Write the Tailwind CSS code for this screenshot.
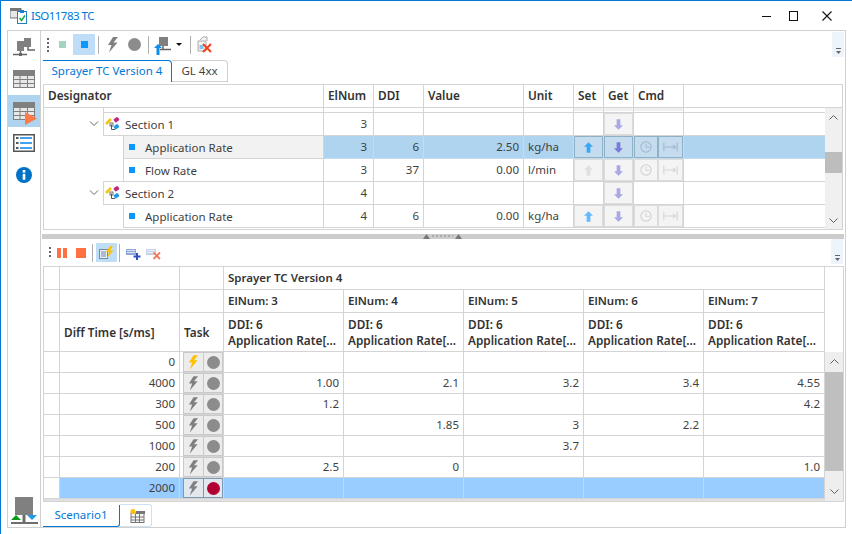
<!DOCTYPE html>
<html lang="en">
<head>
<meta charset="UTF-8" />
<title>ISO11783 TC</title>
<script src="https://cdn.jsdelivr.net/npm/@tailwindcss/browser@4"></script>
</head>
<body class="bg-white">
<svg class="absolute w-0 h-0">
  <defs>
    <symbol id="bolt" viewBox="0 0 12 16"><path d="M6 0 L1 8 L4.5 8 L2 15.5 L10.5 5.5 L6.5 5.5 L11 0 Z" fill="currentColor"/></symbol>
    <symbol id="up" viewBox="0 0 12 14"><path d="M6 0 L12 6 L8.5 6 L8.5 14 L3.5 14 L3.5 6 L0 6 Z" fill="currentColor"/></symbol>
    <symbol id="down" viewBox="0 0 12 14"><path d="M6 14 L12 8 L8.5 8 L8.5 0 L3.5 0 L3.5 8 L0 8 Z" fill="currentColor"/></symbol>
    <symbol id="clock" viewBox="0 0 14 14"><circle cx="7" cy="7" r="6" fill="none" stroke="currentColor" stroke-width="1.2"/><path d="M7 3 V7.5 H11" fill="none" stroke="currentColor"/></symbol>
    <symbol id="range" viewBox="0 0 18 12"><path d="M1 1 V11 M17 1 V11 M2 6 H15 M12 3.5 L15 6 L12 8.5" fill="none" stroke="currentColor" stroke-width="1.3"/></symbol>
    <symbol id="sect" viewBox="0 0 17 16">
      <path d="M1 7 L6 2 L8 4 L3 9 Z" fill="#f5c518"/>
      <rect x="10" y="2" width="5" height="4" rx="1" fill="#c2267a" transform="rotate(-35 12 4)"/>
      <path d="M7.500 8.500 V13.500 H11" fill="none" stroke="#555" stroke-width="1"/>
      <rect x="10" y="9" width="5" height="4" rx="1" fill="#1e9be8" transform="rotate(-35 12 11)"/>
      <rect x="6" y="7" width="3" height="3" fill="none" stroke="#555" stroke-width="0.8"/>
    </symbol>
    <symbol id="grid" viewBox="0 0 22 18">
      <rect width="22" height="18" fill="#808080"/>
      <path d="M1 6 H6.500 V9 H1 Z M7.500 6 H14 V9 H7.500 Z M15 6 H21 V9 H15 Z M1 10 H6.500 V13 H1 Z M7.500 10 H14 V13 H7.500 Z M15 10 H21 V13 H15 Z M1 14 H6.500 V17 H1 Z M7.500 14 H14 V17 H7.500 Z M15 14 H21 V17 H15 Z" fill="#e8e8e8"/>
    </symbol>
  </defs>
</svg>

<div class="w-[852px] h-[534px] overflow-hidden border-t border-l border-[#0078d7] flex flex-col font-['Noto_Sans','Open_Sans',sans-serif] text-[11.5px] text-[#3f3f3f]">

  <!-- title bar -->
  <div class="h-[29px] flex items-center shrink-0 relative">
    <svg class="ml-[9px] mt-[1px]" width="17" height="16" viewBox="0 0 17 16">
      <rect x="0" y="0" width="11" height="10" fill="#e6e6e6" stroke="#777"/>
      <rect x="0" y="0" width="11" height="3" fill="#777"/>
      <rect x="7.500" y="3.500" width="9" height="12" fill="#fff" stroke="#1f7fc4"/>
      <rect x="10" y="2" width="4" height="3" fill="#1f7fc4"/>
      <path d="M9.500 10 L11.500 12.500 L15 7.500" fill="none" stroke="#1aa84b" stroke-width="1.500"/>
    </svg>
    <span class="ml-[4px] text-[#0078d7] text-[11.5px] tracking-[-0.5px]">ISO11783 TC</span>
    <div class="ml-auto mr-[20px] flex items-center">
      <svg width="9" height="10" viewBox="0 0 9 10"><path d="M0 5.500 H9" stroke="#111"/></svg>
      <svg class="ml-[18px]" width="9" height="10" viewBox="0 0 9 10"><rect x="0.500" y="0.500" width="8" height="9" fill="none" stroke="#111"/></svg>
      <svg class="ml-[24px]" width="10" height="10" viewBox="0 0 10 10"><path d="M0.500 0.500 L9.500 9.500 M9.500 0.500 L0.500 9.500" stroke="#111" stroke-width="1.100"/></svg>
    </div>
  </div>

  <!-- main box -->
  <div class="ml-[6px] w-[839px] h-[498px] border border-[#d0d0d0] flex">

    <!-- sidebar -->
    <div class="w-[33px] border-r border-[#d0d0d0] flex flex-col shrink-0">
      <div class="h-[32px] flex items-center justify-center">
        <svg width="23" height="21" viewBox="0 0 23 21">
          <rect x="11" y="1" width="7" height="9" fill="#808080"/>
          <rect x="4" y="4" width="7" height="10" fill="#808080"/>
          <path d="M15 10 V13 H22 M7.500 14 V19 M0 17.500 H14" fill="none" stroke="#666" stroke-width="1.500"/>
          <rect x="6" y="16" width="3" height="3" fill="#666"/>
        </svg>
      </div>
      <div class="h-[32px] flex items-center justify-center"><svg width="22" height="18"><use href="#grid"/></svg></div>
      <div class="h-[32px] bg-[#aed4ef] flex items-center justify-center relative">
        <svg width="22" height="18"><use href="#grid"/></svg>
        <svg class="absolute left-[17px] top-[17px]" width="12" height="13" viewBox="0 0 12 13"><path d="M0 0 L12 6.500 L0 13 Z" fill="#ff7a45"/></svg>
      </div>
      <div class="h-[32px] flex items-center justify-center">
        <svg width="22" height="18" viewBox="0 0 22 18">
          <rect x="0.750" y="0.750" width="20.500" height="16.500" fill="#fff" stroke="#555" stroke-width="1.500"/>
          <path d="M3 4 H5.500 M3 9 H5.500 M3 14 H5.500" stroke="#555" stroke-width="2"/>
          <path d="M7 4 H19 M7 9 H19 M7 14 H19" stroke="#0a84e8" stroke-width="1.600"/>
        </svg>
      </div>
      <div class="h-[32px] flex items-center justify-center">
        <svg width="16" height="16" viewBox="0 0 16 16">
          <circle cx="8" cy="8" r="8" fill="#0072c6"/>
          <rect x="6.700" y="3" width="2.600" height="2.600" fill="#fff"/>
          <rect x="6.700" y="6.800" width="2.600" height="6" fill="#fff"/>
        </svg>
      </div>
      <div class="mt-auto mb-[2px] pl-[3px]">
        <svg width="27" height="28" viewBox="0 0 27 28">
          <rect x="4" y="0" width="18" height="18" fill="#808080"/>
          <path d="M11.500 18 H14.500 V25 H11.500 Z M0 25 H27 V27 H0 Z" fill="#6e6e6e"/>
          <path d="M0 23 L5 18 L10 23 Z" fill="#0a9a1e"/>
          <path d="M16 18 L26 18 L21 23 Z" fill="#1e9be8"/>
        </svg>
      </div>
    </div>

    <!-- right pane -->
    <div class="flex-1 flex flex-col min-w-0">

      <!-- top toolbar -->
      <div class="h-[27px] flex items-center shrink-0 relative">
        <div class="ml-[6px] w-[2px] h-[14px] bg-[repeating-linear-gradient(#666_0_2px,transparent_2px_4px)]"></div>
        <div class="ml-[10px] w-[7px] h-[7px] bg-[#a3d4c0]"></div>
        <div class="ml-[7px] w-[22px] h-[21px] bg-[#c0ddf8] flex items-center justify-center"><div class="w-[7px] h-[7px] bg-[#0a98ff]"></div></div>
        <div class="ml-[3px] w-px h-[18px] bg-[#b0b0b0]"></div>
        <svg class="ml-[8px] text-[#808080]" width="12" height="16"><use href="#bolt"/></svg>
        <svg class="ml-[9px]" width="13" height="13" viewBox="0 0 13 13"><circle cx="6.500" cy="6.500" r="6.500" fill="#8c8c8c"/></svg>
        <div class="ml-[7px] w-px h-[18px] bg-[#b0b0b0]"></div>
        <svg class="ml-[5px] mt-[2px]" width="17" height="18" viewBox="0 0 17 18">
          <rect x="5" y="0" width="9" height="9" fill="#808080"/>
          <path d="M9 9 V12 M6 12.500 H17" stroke="#666" stroke-width="1.500"/>
          <path d="M0 11 L4 7 L8 11 L5.500 11 L5.500 18 L2.500 18 L2.500 11 Z" fill="#0a8ff0"/>
        </svg>
        <svg class="ml-[5px]" width="6" height="3" viewBox="0 0 6 3"><path d="M0 0 H6 L3 3 Z" fill="#111"/></svg>
        <div class="ml-[8px] w-px h-[18px] bg-[#b0b0b0]"></div>
        <svg class="ml-[6px]" width="15" height="17" viewBox="0 0 15 17">
          <path d="M3 4 L6 1 H10 V5 M1 5 H9 V15 H1 Z" fill="#f3f3f3" stroke="#aaa"/>
          <rect x="2.500" y="9" width="4" height="4" fill="#7fc3f0"/>
          <path d="M6 8 L14 16 M14 8 L6 16" stroke="#f0401c" stroke-width="2"/>
        </svg>
        <div class="absolute left-[791px] top-[1px] w-[12px] h-[25px] bg-[#eef4fb] flex flex-col items-center justify-end pb-[3px]">
          <div class="w-[5px] h-px bg-[#666]"></div>
          <svg class="mt-[2px]" width="5" height="3" viewBox="0 0 5 3"><path d="M0 0 H5 L2.500 3 Z" fill="#666"/></svg>
        </div>
      </div>

      <!-- tabs -->
      <div class="h-[26px] pl-[2px] pt-[2px] flex shrink-0">
        <div class="w-[129px] h-[22px] border-t border-r border-[#0078d7] rounded-tr-[4px] text-[#0078d7] text-center leading-[20px]">Sprayer TC Version 4</div>
        <div class="w-[56px] h-[22px] border-t border-r border-b border-[#d0d0d0] rounded-tr-[4px] text-center leading-[20px]">GL 4xx</div>
      </div>

      <!-- device grid -->
      <div class="ml-[2px] w-[800px] h-[146px] border border-[#d4d4d4] flex flex-col shrink-0">
        <div class="flex h-[23px] font-semibold text-[11.8px] text-[#333] leading-[21px] [&>div]:border-r [&>div]:border-b [&>div]:border-[#d4d4d4] [&>div]:px-[4px]">
          <div class="w-[280px]">Designator</div>
          <div class="w-[50px]">ElNum</div>
          <div class="w-[50px]">DDI</div>
          <div class="w-[100px]">Value</div>
          <div class="w-[50px]">Unit</div>
          <div class="w-[30px]">Set</div>
          <div class="w-[30px]">Get</div>
          <div class="w-[50px]">Cmd</div>
          <div class="flex-1 !border-r-0"></div>
        </div>
        <div class="flex h-[121px]">
          <div class="w-[781px] overflow-hidden">
            <div class="flex h-[5px] [&>div]:border-r [&>div]:border-b [&>div]:border-[#d4d4d4]">
              <div class="w-[280px] !border-b-0 relative"><div class="absolute left-[59px] top-0 bottom-0 border-l border-[#d4d4d4]"></div><div class="absolute left-[59px] right-0 bottom-0 border-b border-[#d4d4d4]"></div></div>
              <div class="w-[50px]"></div><div class="w-[50px]"></div><div class="w-[100px]"></div><div class="w-[50px]"></div>
              <div class="w-[30px] bg-[linear-gradient(#f0f0f0_3px,#fff_3px)]"></div><div class="w-[30px] bg-[linear-gradient(#f0f0f0_3px,#fff_3px)]"></div><div class="w-[50px] bg-[linear-gradient(#f0f0f0_3px,#fff_3px)]"></div><div class="flex-1 !border-r-0"></div>
            </div>

            <div class="flex h-[23px] leading-[21px] [&>div]:border-r [&>div]:border-[#d4d4d4]">
              <div class="w-[280px] relative"><svg class="absolute left-[45px] top-[8px]" width="10" height="6" viewBox="0 0 10 6"><path d="M1 0.500 L5 4.500 L9 0.500" fill="none" stroke="#666"/></svg>
                <div class="ml-[59px] h-[23px] border-l border-b border-[#d4d4d4] flex items-center"><svg width="17" height="16"><use href="#sect"/></svg><span class="ml-[4px]">Section 1</span></div></div>
              <div class="w-[50px] border-b text-right pr-[6px]">3</div><div class="w-[50px] border-b"></div><div class="w-[100px] border-b"></div><div class="w-[50px] border-b"></div><div class="w-[30px] border-b"></div>
              <div class="w-[30px] border-b"><div class="h-full bg-[#f4f4f4] border border-[#dcdcdc] flex items-center justify-center"><svg class="text-[#a9a9e6]" width="9" height="13"><use href="#down"/></svg></div></div>
              <div class="w-[50px] border-b"></div><div class="flex-1 border-b !border-r-0"></div>
            </div>

            <div class="flex h-[23px] leading-[21px] bg-[#aed4ef] [&>div]:border-r [&>div]:border-[#c4dcec]">
              <div class="w-[280px] bg-white !border-r-[#d4d4d4]"><div class="ml-[79px] h-[23px] bg-[#f2f2f2] border-l border-b border-[#d4d4d4] flex items-center"><div class="ml-[5px] w-[6px] h-[6px] bg-[#0a98ff] mb-[1px]"></div><span class="ml-[10px]">Application Rate</span></div></div>
              <div class="w-[50px] border-b text-right pr-[6px]">3</div><div class="w-[50px] border-b text-right pr-[4px]">6</div><div class="w-[100px] border-b text-right pr-[4px]">2.50</div><div class="w-[50px] border-b pl-[4px]">kg/ha</div>
              <div class="w-[30px] border-b"><div class="h-full border border-[#8eb1c8] bg-[#c5dcee] flex items-center justify-center"><svg class="text-[#3aa6f5]" width="9" height="13"><use href="#up"/></svg></div></div>
              <div class="w-[30px] border-b"><div class="h-full border border-[#8eb1c8] bg-[#c5dcee] flex items-center justify-center"><svg class="text-[#7a7ad8]" width="9" height="13"><use href="#down"/></svg></div></div>
              <div class="w-[50px] border-b flex"><div class="w-[24px] border border-[#8eb1c8] bg-[#c5dcee] flex items-center justify-center"><svg class="text-[#9db8cc]" width="12" height="12"><use href="#clock"/></svg></div><div class="w-[25px] border border-[#8eb1c8] bg-[#c5dcee] flex items-center justify-center"><svg class="text-[#9db8cc]" width="15" height="10"><use href="#range"/></svg></div></div>
              <div class="flex-1 border-b !border-r-0"></div>
            </div>

            <div class="flex h-[23px] leading-[21px] [&>div]:border-r [&>div]:border-[#d4d4d4]">
              <div class="w-[280px]"><div class="ml-[79px] h-[23px] border-l border-b border-[#d4d4d4] flex items-center"><div class="ml-[5px] w-[6px] h-[6px] bg-[#0a98ff] mb-[1px]"></div><span class="ml-[10px]">Flow Rate</span></div></div>
              <div class="w-[50px] border-b text-right pr-[6px]">3</div><div class="w-[50px] border-b text-right pr-[4px]">37</div><div class="w-[100px] border-b text-right pr-[4px]">0.00</div><div class="w-[50px] border-b pl-[4px]">l/min</div>
              <div class="w-[30px] border-b"><div class="h-full bg-[#f4f4f4] border border-[#dcdcdc] flex items-center justify-center"><svg class="text-[#e0e0e0]" width="9" height="13"><use href="#up"/></svg></div></div>
              <div class="w-[30px] border-b"><div class="h-full bg-[#f4f4f4] border border-[#dcdcdc] flex items-center justify-center"><svg class="text-[#a9a9e6]" width="9" height="13"><use href="#down"/></svg></div></div>
              <div class="w-[50px] border-b flex"><div class="w-[24px] bg-[#f4f4f4] border border-[#dcdcdc] flex items-center justify-center"><svg class="text-[#cfcfcf]" width="12" height="12"><use href="#clock"/></svg></div><div class="w-[25px] bg-[#f4f4f4] border border-[#dcdcdc] flex items-center justify-center"><svg class="text-[#d4d4d4]" width="15" height="10"><use href="#range"/></svg></div></div>
              <div class="flex-1 border-b !border-r-0"></div>
            </div>

            <div class="flex h-[23px] leading-[21px] [&>div]:border-r [&>div]:border-[#d4d4d4]">
              <div class="w-[280px] relative"><svg class="absolute left-[45px] top-[8px]" width="10" height="6" viewBox="0 0 10 6"><path d="M1 0.500 L5 4.500 L9 0.500" fill="none" stroke="#666"/></svg>
                <div class="ml-[59px] h-[24px] -mt-px border-l border-t border-b border-[#d4d4d4] flex items-center"><svg width="17" height="16"><use href="#sect"/></svg><span class="ml-[4px]">Section 2</span></div></div>
              <div class="w-[50px] border-b text-right pr-[6px]">4</div><div class="w-[50px] border-b"></div><div class="w-[100px] border-b"></div><div class="w-[50px] border-b"></div><div class="w-[30px] border-b"></div>
              <div class="w-[30px] border-b"><div class="h-full bg-[#f4f4f4] border border-[#dcdcdc] flex items-center justify-center"><svg class="text-[#a9a9e6]" width="9" height="13"><use href="#down"/></svg></div></div>
              <div class="w-[50px] border-b"></div><div class="flex-1 border-b !border-r-0"></div>
            </div>

            <div class="flex h-[23px] leading-[21px] [&>div]:border-r [&>div]:border-[#d4d4d4]">
              <div class="w-[280px]"><div class="ml-[79px] h-[23px] border-l border-b border-[#d4d4d4] flex items-center"><div class="ml-[5px] w-[6px] h-[6px] bg-[#0a98ff] mb-[1px]"></div><span class="ml-[10px]">Application Rate</span></div></div>
              <div class="w-[50px] border-b text-right pr-[6px]">4</div><div class="w-[50px] border-b text-right pr-[4px]">6</div><div class="w-[100px] border-b text-right pr-[4px]">0.00</div><div class="w-[50px] border-b pl-[4px]">kg/ha</div>
              <div class="w-[30px] border-b"><div class="h-full bg-[#f4f4f4] border border-[#dcdcdc] flex items-center justify-center"><svg class="text-[#66b8ff]" width="9" height="13"><use href="#up"/></svg></div></div>
              <div class="w-[30px] border-b"><div class="h-full bg-[#f4f4f4] border border-[#dcdcdc] flex items-center justify-center"><svg class="text-[#a9a9e6]" width="9" height="13"><use href="#down"/></svg></div></div>
              <div class="w-[50px] border-b flex"><div class="w-[24px] bg-[#f4f4f4] border border-[#dcdcdc] flex items-center justify-center"><svg class="text-[#cfcfcf]" width="12" height="12"><use href="#clock"/></svg></div><div class="w-[25px] bg-[#f4f4f4] border border-[#dcdcdc] flex items-center justify-center"><svg class="text-[#d4d4d4]" width="15" height="10"><use href="#range"/></svg></div></div>
              <div class="flex-1 border-b !border-r-0"></div>
            </div>
          </div>
          <!-- scrollbar -->
          <div class="w-[17px] bg-[#f0f0f0] flex flex-col items-center">
            <svg class="mt-[7px]" width="9" height="5" viewBox="0 0 9 5"><path d="M0.500 4.500 L4.500 0.500 L8.500 4.500" fill="none" stroke="#606060"/></svg>
            <div class="mt-[32px] w-full h-[21px] bg-[#bdbdbd]"></div>
            <svg class="mt-[45px]" width="9" height="5" viewBox="0 0 9 5"><path d="M0.500 0.500 L4.500 4.500 L8.500 0.500" fill="none" stroke="#606060"/></svg>
          </div>
        </div>
      </div>

      <!-- splitter -->
      <div class="mt-[4px] ml-[1px] w-[802px] h-[5px] bg-[#cccccc] flex items-center justify-center shrink-0">
        <svg width="40" height="5" viewBox="0 0 40 5">
          <path d="M0 5 L3.500 0 L7 5 Z M32 5 L35.500 0 L39 5 Z" fill="#777"/>
          <path d="M9 2 H30" stroke="#888" stroke-dasharray="2 2"/>
        </svg>
      </div>

      <!-- log toolbar -->
      <div class="h-[27px] flex items-center shrink-0 relative">
        <div class="ml-[8px] w-[2px] h-[12px] bg-[repeating-linear-gradient(#666_0_2px,transparent_2px_4px)]"></div>
        <div class="ml-[6px] w-[4px] h-[10px] bg-[#ff7043]"></div>
        <div class="ml-[2px] w-[4px] h-[10px] bg-[#ff7043]"></div>
        <div class="ml-[9px] w-[10px] h-[10px] bg-[#ff7043]"></div>
        <div class="ml-[6px] w-px h-[18px] bg-[#b0b0b0]"></div>
        <div class="ml-[3px] w-[21px] h-[19px] bg-[#c0ddf8] flex items-center justify-center">
          <svg width="15" height="14" viewBox="0 0 15 14">
            <rect x="0.500" y="3.500" width="8" height="9" fill="#e8f0f8" stroke="#6f8aa5"/>
            <path d="M2 6 H7 M2 8 H7 M2 10 H7" stroke="#6f8aa5"/>
            <path d="M11 0 L7 6 L10 6 L8 12 L14.500 4.500 L11 4.500 L14 0 Z" fill="#ffc000"/>
          </svg>
        </div>
        <div class="ml-[2px] w-px h-[18px] bg-[#b0b0b0]"></div>
        <svg class="ml-[6px] mt-[3px]" width="15" height="11" viewBox="0 0 15 11">
          <rect x="0" y="0" width="10" height="6" fill="#8fa8d8"/>
          <path d="M1 1.500 H9 M1 3.500 H9" stroke="#d9e4f5"/>
          <path d="M11 4 V11 M7.500 7.500 H14.500" stroke="#2a52be" stroke-width="2"/>
        </svg>
        <svg class="ml-[5px] mt-[3px]" width="15" height="11" viewBox="0 0 15 11">
          <rect x="0" y="0" width="10" height="6" fill="#c5d2ea"/>
          <path d="M1 1.500 H9 M1 3.500 H9" stroke="#edf1f8"/>
          <path d="M7.500 3.500 L14 10 M14 3.500 L7.500 10" stroke="#f47a5c" stroke-width="1.800"/>
        </svg>
        <div class="absolute left-[790px] top-[0px] w-[12px] h-[25px] bg-[#eef4fb] flex flex-col items-center justify-end pb-[3px]">
          <div class="w-[5px] h-px bg-[#666]"></div>
          <svg class="mt-[2px]" width="5" height="3" viewBox="0 0 5 3"><path d="M0 0 H5 L2.500 3 Z" fill="#666"/></svg>
        </div>
      </div>

      <!-- scenario grid -->
      <div class="ml-[2px] w-[801px] h-[236px] border border-[#d4d4d4] flex flex-col shrink-0 font-normal">
        <div class="flex h-[23px] font-semibold text-[#333] leading-[22px] [&>div]:border-r [&>div]:border-b [&>div]:border-[#d4d4d4]">
          <div class="w-[16px]"></div><div class="w-[120px]"></div><div class="w-[44px]"></div>
          <div class="w-[601px] pl-[4px]">Sprayer TC Version 4</div>
          <div class="flex-1 !border-0"></div>
        </div>
        <div class="flex h-[23px] font-semibold text-[#333] leading-[21px] [&>div]:border-r [&>div]:border-b [&>div]:border-[#d4d4d4]">
          <div class="w-[16px]"></div><div class="w-[120px]"></div><div class="w-[44px]"></div>
          <div class="w-[120px] pl-[4px]">ElNum: 3</div><div class="w-[120px] pl-[4px]">ElNum: 4</div><div class="w-[120px] pl-[4px]">ElNum: 5</div><div class="w-[120px] pl-[4px]">ElNum: 6</div><div class="w-[121px] pl-[4px]">ElNum: 7</div>
          <div class="flex-1 !border-0"></div>
        </div>
        <div class="flex h-[39px] font-semibold text-[11.8px] text-[#333] leading-[16px] [&>div]:border-r [&>div]:border-b [&>div]:border-[#d4d4d4]">
          <div class="w-[16px]"></div>
          <div class="w-[120px] pl-[4px] flex items-center">Diff Time [s/ms]</div>
          <div class="w-[44px] pl-[4px] flex items-center">Task</div>
          <div class="w-[120px] pl-[4px] pt-[3px]">DDI: 6<br>Application Rate[...</div>
          <div class="w-[120px] pl-[4px] pt-[3px]">DDI: 6<br>Application Rate[...</div>
          <div class="w-[120px] pl-[4px] pt-[3px]">DDI: 6<br>Application Rate[...</div>
          <div class="w-[120px] pl-[4px] pt-[3px]">DDI: 6<br>Application Rate[...</div>
          <div class="w-[121px] pl-[4px] pt-[3px]">DDI: 6<br>Application Rate[...</div>
          <div class="flex-1 !border-0"></div>
        </div>
        <div class="flex flex-1 min-h-0">
          <div class="w-[781px] bg-[linear-gradient(#0000_146px,#e0e0e0_146px)]">
            <div class="flex h-[21px] leading-[19px] text-right [&>div]:border-r [&>div]:border-b [&>div]:border-[#d4d4d4] [&>div]:pr-[4px]">
              <div class="w-[16px]"></div><div class="w-[120px]">0</div>
              <div class="w-[44px] !pr-0 pl-[3px]"><div class="flex h-full bg-[#c9c9c9] p-[1px] gap-[1px]"><div class="w-[19px] bg-[#ececec] flex items-center justify-center"><svg class="text-[#ffc000]" width="11" height="15"><use href="#bolt"/></svg></div><div class="w-[18px] bg-[#ececec] flex items-center justify-center"><svg width="13" height="13"><circle cx="6.500" cy="6.500" r="6.500" fill="#8c8c8c"/></svg></div></div></div>
              <div class="w-[120px]"></div><div class="w-[120px]"></div><div class="w-[120px]"></div><div class="w-[120px]"></div><div class="w-[121px]"></div>
            </div>
            <div class="flex h-[21px] leading-[19px] text-right [&>div]:border-r [&>div]:border-b [&>div]:border-[#d4d4d4] [&>div]:pr-[4px]">
              <div class="w-[16px]"></div><div class="w-[120px]">4000</div>
              <div class="w-[44px] !pr-0 pl-[3px]"><div class="flex h-full bg-[#c9c9c9] p-[1px] gap-[1px]"><div class="w-[19px] bg-[#ececec] flex items-center justify-center"><svg class="text-[#808080]" width="11" height="15"><use href="#bolt"/></svg></div><div class="w-[18px] bg-[#ececec] flex items-center justify-center"><svg width="13" height="13"><circle cx="6.500" cy="6.500" r="6.500" fill="#8c8c8c"/></svg></div></div></div>
              <div class="w-[120px]">1.00</div><div class="w-[120px]">2.1</div><div class="w-[120px]">3.2</div><div class="w-[120px]">3.4</div><div class="w-[121px]">4.55</div>
            </div>
            <div class="flex h-[21px] leading-[19px] text-right [&>div]:border-r [&>div]:border-b [&>div]:border-[#d4d4d4] [&>div]:pr-[4px]">
              <div class="w-[16px]"></div><div class="w-[120px]">300</div>
              <div class="w-[44px] !pr-0 pl-[3px]"><div class="flex h-full bg-[#c9c9c9] p-[1px] gap-[1px]"><div class="w-[19px] bg-[#ececec] flex items-center justify-center"><svg class="text-[#808080]" width="11" height="15"><use href="#bolt"/></svg></div><div class="w-[18px] bg-[#ececec] flex items-center justify-center"><svg width="13" height="13"><circle cx="6.500" cy="6.500" r="6.500" fill="#8c8c8c"/></svg></div></div></div>
              <div class="w-[120px]">1.2</div><div class="w-[120px]"></div><div class="w-[120px]"></div><div class="w-[120px]"></div><div class="w-[121px]">4.2</div>
            </div>
            <div class="flex h-[21px] leading-[19px] text-right [&>div]:border-r [&>div]:border-b [&>div]:border-[#d4d4d4] [&>div]:pr-[4px]">
              <div class="w-[16px]"></div><div class="w-[120px]">500</div>
              <div class="w-[44px] !pr-0 pl-[3px]"><div class="flex h-full bg-[#c9c9c9] p-[1px] gap-[1px]"><div class="w-[19px] bg-[#ececec] flex items-center justify-center"><svg class="text-[#808080]" width="11" height="15"><use href="#bolt"/></svg></div><div class="w-[18px] bg-[#ececec] flex items-center justify-center"><svg width="13" height="13"><circle cx="6.500" cy="6.500" r="6.500" fill="#8c8c8c"/></svg></div></div></div>
              <div class="w-[120px]"></div><div class="w-[120px]">1.85</div><div class="w-[120px]">3</div><div class="w-[120px]">2.2</div><div class="w-[121px]"></div>
            </div>
            <div class="flex h-[21px] leading-[19px] text-right [&>div]:border-r [&>div]:border-b [&>div]:border-[#d4d4d4] [&>div]:pr-[4px]">
              <div class="w-[16px]"></div><div class="w-[120px]">1000</div>
              <div class="w-[44px] !pr-0 pl-[3px]"><div class="flex h-full bg-[#c9c9c9] p-[1px] gap-[1px]"><div class="w-[19px] bg-[#ececec] flex items-center justify-center"><svg class="text-[#808080]" width="11" height="15"><use href="#bolt"/></svg></div><div class="w-[18px] bg-[#ececec] flex items-center justify-center"><svg width="13" height="13"><circle cx="6.500" cy="6.500" r="6.500" fill="#8c8c8c"/></svg></div></div></div>
              <div class="w-[120px]"></div><div class="w-[120px]"></div><div class="w-[120px]">3.7</div><div class="w-[120px]"></div><div class="w-[121px]"></div>
            </div>
            <div class="flex h-[21px] leading-[19px] text-right [&>div]:border-r [&>div]:border-b [&>div]:border-[#d4d4d4] [&>div]:pr-[4px]">
              <div class="w-[16px]"></div><div class="w-[120px]">200</div>
              <div class="w-[44px] !pr-0 pl-[3px]"><div class="flex h-full bg-[#c9c9c9] p-[1px] gap-[1px]"><div class="w-[19px] bg-[#ececec] flex items-center justify-center"><svg class="text-[#808080]" width="11" height="15"><use href="#bolt"/></svg></div><div class="w-[18px] bg-[#ececec] flex items-center justify-center"><svg width="13" height="13"><circle cx="6.500" cy="6.500" r="6.500" fill="#8c8c8c"/></svg></div></div></div>
              <div class="w-[120px]">2.5</div><div class="w-[120px]">0</div><div class="w-[120px]"></div><div class="w-[120px]"></div><div class="w-[121px]">1.0</div>
            </div>
            <div class="flex h-[21px] leading-[19px] text-right [&>div]:border-r [&>div]:border-b [&>div]:border-[#d4d4d4] [&>div]:pr-[4px]">
              <div class="w-[16px] bg-white"></div><div class="w-[120px] bg-[#99ccff]">2000</div>
              <div class="w-[44px] !pr-0 pl-[3px] bg-[#99ccff]"><div class="flex h-full bg-[#7d9ab5] p-[1px] gap-[1px]"><div class="w-[19px] bg-[#e3e8ee] flex items-center justify-center"><svg class="text-[#808080]" width="11" height="15"><use href="#bolt"/></svg></div><div class="w-[18px] bg-[#e3e8ee] flex items-center justify-center"><svg width="13" height="13"><circle cx="6.500" cy="6.500" r="6.500" fill="#b30033"/></svg></div></div></div>
              <div class="w-[120px] bg-[#99ccff]"></div><div class="w-[120px] bg-[#99ccff]"></div><div class="w-[120px] bg-[#99ccff]"></div><div class="w-[120px] bg-[#99ccff]"></div><div class="w-[121px] bg-[#99ccff]"></div>
            </div>
          </div>
          <!-- scrollbar -->
          <div class="flex-1 bg-[#eeeeee] flex flex-col items-center">
            <svg class="mt-[7px]" width="9" height="5" viewBox="0 0 9 5"><path d="M0.500 4.500 L4.500 0.500 L8.500 4.500" fill="none" stroke="#606060"/></svg>
            <div class="mt-[8px] w-full h-[99px] bg-[#bfbfbf]"></div>
            <svg class="mt-[18px]" width="9" height="5" viewBox="0 0 9 5"><path d="M0.500 0.500 L4.500 4.500 L8.500 0.500" fill="none" stroke="#606060"/></svg>
          </div>
        </div>
      </div>

      <!-- sheet tabs -->
      <div class="ml-[2px] mt-[2px] flex items-start">
        <div class="w-[77px] h-[22px] mt-[1px] border-r border-b border-[#0078d7] rounded-br-[3px] text-[#0078d7] text-center leading-[20px]">Scenario1</div>
        <div class="w-[32px] h-[23px] border-r border-t border-b border-[#cfe3f3] rounded-r-[3px] flex items-center justify-center">
          <svg class="ml-[3px] mt-[1px]" width="15" height="14" viewBox="0 0 15 14">
            <rect x="1" y="4" width="13" height="9.500" fill="#f6f6f6" stroke="#777"/>
            <rect x="6" y="2" width="9" height="3" fill="#777"/>
            <path d="M1 8 H14 M1 11 H14 M5.500 5 V13 M9.500 5 V13" stroke="#777"/>
            <circle cx="3" cy="2.500" r="2.500" fill="#ffc000"/>
          </svg>
        </div>
      </div>
    </div>
  </div>
</div>
</body>
</html>
